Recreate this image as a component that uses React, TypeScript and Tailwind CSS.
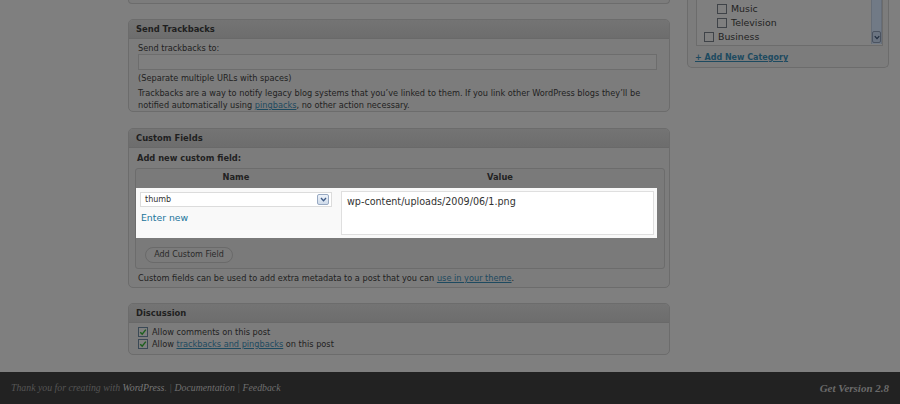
import React from 'react';

// Dimmed WordPress 2.8 "Edit Post" screen with the custom field row highlighted

interface BoxProps {
  title: string;
  className?: string;
  children: React.ReactNode;
}

const Box: React.FC<BoxProps> = ({ title, className = '', children }) => (
  <div className={`border border-[#6c6c6c] rounded-[5px] bg-[#7c7c7c] ${className}`}>
    <div className="h-[19px] px-[7px] bg-linear-to-b from-[#747474] to-[#6d6d6d] border-b border-[#696969] rounded-t-[4px] text-[8.4px] font-bold leading-[19px] text-[#1f1f1f]">
      {title}
    </div>
    {children}
  </div>
);

const Checked: React.FC = () => (
  <span className="w-[10px] h-[10px] border border-[#3a4956] bg-[#7f7f7f] flex items-center justify-center shrink-0">
    <svg viewBox="0 0 10 10" className="w-[8px] h-[8px]">
      <path d="M1.5 5.2 4 7.6 8.5 2" fill="none" stroke="#1d5f1d" strokeWidth={1.8} />
    </svg>
  </span>
);

const CatBox: React.FC = () => (
  <span className="w-[10px] h-[10px] border border-[#3f4348] bg-[#7f7f7f] shrink-0" />
);

const categories = [
  { name: 'Movies', child: true },
  { name: 'Music', child: true },
  { name: 'Television', child: true },
  { name: 'Business', child: false },
];

export default function App() {
  return (
    <div className="w-[900px] h-[404px] overflow-hidden flex flex-col bg-[#7f7f7f] font-['DejaVu_Sans',Verdana,sans-serif] text-[8.2px] text-[#222]">
      <div className="h-[372px] flex overflow-hidden">
        {/* Main column */}
        <div className="ml-[128px] w-[542px] flex flex-col">
          <div className="h-[4px] border-x border-b border-[#6c6c6c] rounded-b-[5px] bg-[#7c7c7c]" />

          <Box title="Send Trackbacks" className="mt-[15px]">
            <div className="px-[9px] pt-[3px] leading-[12px]">
              <div>Send trackbacks to:</div>
              <div className="h-[16px] w-[519px] border border-[#6d6d6d] bg-[#7f7f7f]" />
              <div className="mt-[2px]">(Separate multiple URLs with spaces)</div>
              <p className="mt-[3px]">
                Trackbacks are a way to notify legacy blog systems that you’ve linked to them. If you link other WordPress blogs they’ll be
                notified automatically using <span className="underline text-[#1d4a60]">pingbacks</span>, no other action necessary.
              </p>
            </div>
          </Box>

          <Box title="Custom Fields" className="mt-[16px]">
            <div className="pt-[4px] pb-[3px]">
              <div className="px-[8px] font-bold leading-[12px] text-[8.3px]">Add new custom field:</div>
              <div className="mt-[4px] ml-[6px] w-[530px] border border-[#6c6c6c] rounded-[3px] bg-[#7a7a7a]">
                <div className="h-[19px] pt-[2px] flex font-bold leading-[12px] text-[8.3px]">
                  <div className="w-[200px] text-center">Name</div>
                  <div className="flex-1 text-center">Value</div>
                </div>
                {/* Highlighted row */}
                <div className="w-[521px] h-[50px] bg-[#f9f9f9] flex text-[#333]">
                  <div className="w-[205px] pl-[4px] pt-[4px]">
                    <div className="w-[192px] h-[15px] bg-white border border-[#dcdcdc] flex items-center justify-between pl-[4px] pr-[2px]">
                      <span className="leading-[13px] text-[8px]">thumb</span>
                      <span className="w-[12px] h-[11px] rounded-[2px] border border-[#98a9c2] bg-linear-to-b from-[#eef3fa] to-[#cfdbea] flex items-center justify-center">
                        <svg viewBox="0 0 8 6" className="w-[7px] h-[5px]">
                          <path d="M1 1.2 4 4.4 7 1.2" fill="none" stroke="#3e5a86" strokeWidth={1.6} />
                        </svg>
                      </span>
                    </div>
                    <div className="mt-[4px] pl-[1px] text-[9.3px] leading-[14px] text-[#21759b]">Enter new</div>
                  </div>
                  <div className="pt-[3px]">
                    <div className="w-[313px] h-[44px] bg-white border border-[#dfdfdf] pl-[5px] pt-[4px] text-[9.6px] leading-[12px]">
                      wp-content/uploads/2009/06/1.png
                    </div>
                  </div>
                </div>
                <div className="mt-[9px] mb-[5px] ml-[9px] w-[88px] h-[16px] rounded-full border border-[#6a6a6a] bg-[#7b7b7b] text-center leading-[14px] text-[8px] text-[#2a2a2a]">
                  Add Custom Field
                </div>
              </div>
              <div className="mt-[3px] px-[9px] leading-[12px]">
                Custom fields can be used to add extra metadata to a post that you can{' '}
                <span className="underline text-[#1d4a60]">use in your theme</span>.
              </div>
            </div>
          </Box>

          <Box title="Discussion" className="mt-[15px]">
            <div className="px-[9px] pt-[3px] pb-[4px] leading-[12px]">
              <div className="flex items-center gap-[4px]">
                <Checked />
                <span>Allow comments on this post</span>
              </div>
              <div className="flex items-center gap-[4px]">
                <Checked />
                <span>
                  Allow <span className="underline text-[#1d4a60]">trackbacks and pingbacks</span> on this post
                </span>
              </div>
            </div>
          </Box>
        </div>

        {/* Sidebar: categories */}
        <div className="ml-[17px] w-[202px] self-start -mt-[20px] border-x border-b border-[#6c6c6c] rounded-b-[5px] bg-[#7c7c7c] pt-[7px] pb-[3px]">
          <div className="ml-[8px] w-[187px] border border-[#6c6c6c] bg-[#7f7f7f] flex pb-[1px]">
            <div className="flex-1 pl-[7px] text-[9.4px] leading-[14px]">
              {categories.map(c => (
                <div key={c.name} className={`h-[14px] flex items-center gap-[4px] ${c.child ? 'pl-[13px]' : ''}`}>
                  <CatBox />
                  <span>{c.name}</span>
                </div>
              ))}
            </div>
            <div className="w-[11px] bg-[#717a86] border-x border-[#666d77] flex flex-col justify-end">
              <div className="h-[12px] mb-[1px] rounded-[2px] border border-[#4b5360] bg-[#6b7481] flex items-center justify-center">
                <svg viewBox="0 0 8 6" className="w-[6px] h-[5px]">
                  <path d="M1 1.2 4 4.4 7 1.2" fill="none" stroke="#1f2b3d" strokeWidth={1.6} />
                </svg>
              </div>
            </div>
          </div>
          <div className="mt-[6px] pl-[7px] font-bold leading-[12px] text-[8px] underline text-[#1d4a60]">+ Add New Category</div>
        </div>
      </div>

      {/* Footer */}
      <div className="h-[32px] bg-[#222] flex items-center justify-between px-[11px] font-['Liberation_Serif',Georgia,serif] italic">
        <div className="text-[9.8px] text-[#555]">
          Thank you for creating with <span className="text-[#777]">WordPress</span>. | <span className="text-[#6f6f6f]">Documentation</span> |{' '}
          <span className="text-[#6f6f6f]">Feedback</span>
        </div>
        <div className="text-[11px] font-bold text-[#6a6a6a]">Get Version 2.8</div>
      </div>
    </div>
  );
}
